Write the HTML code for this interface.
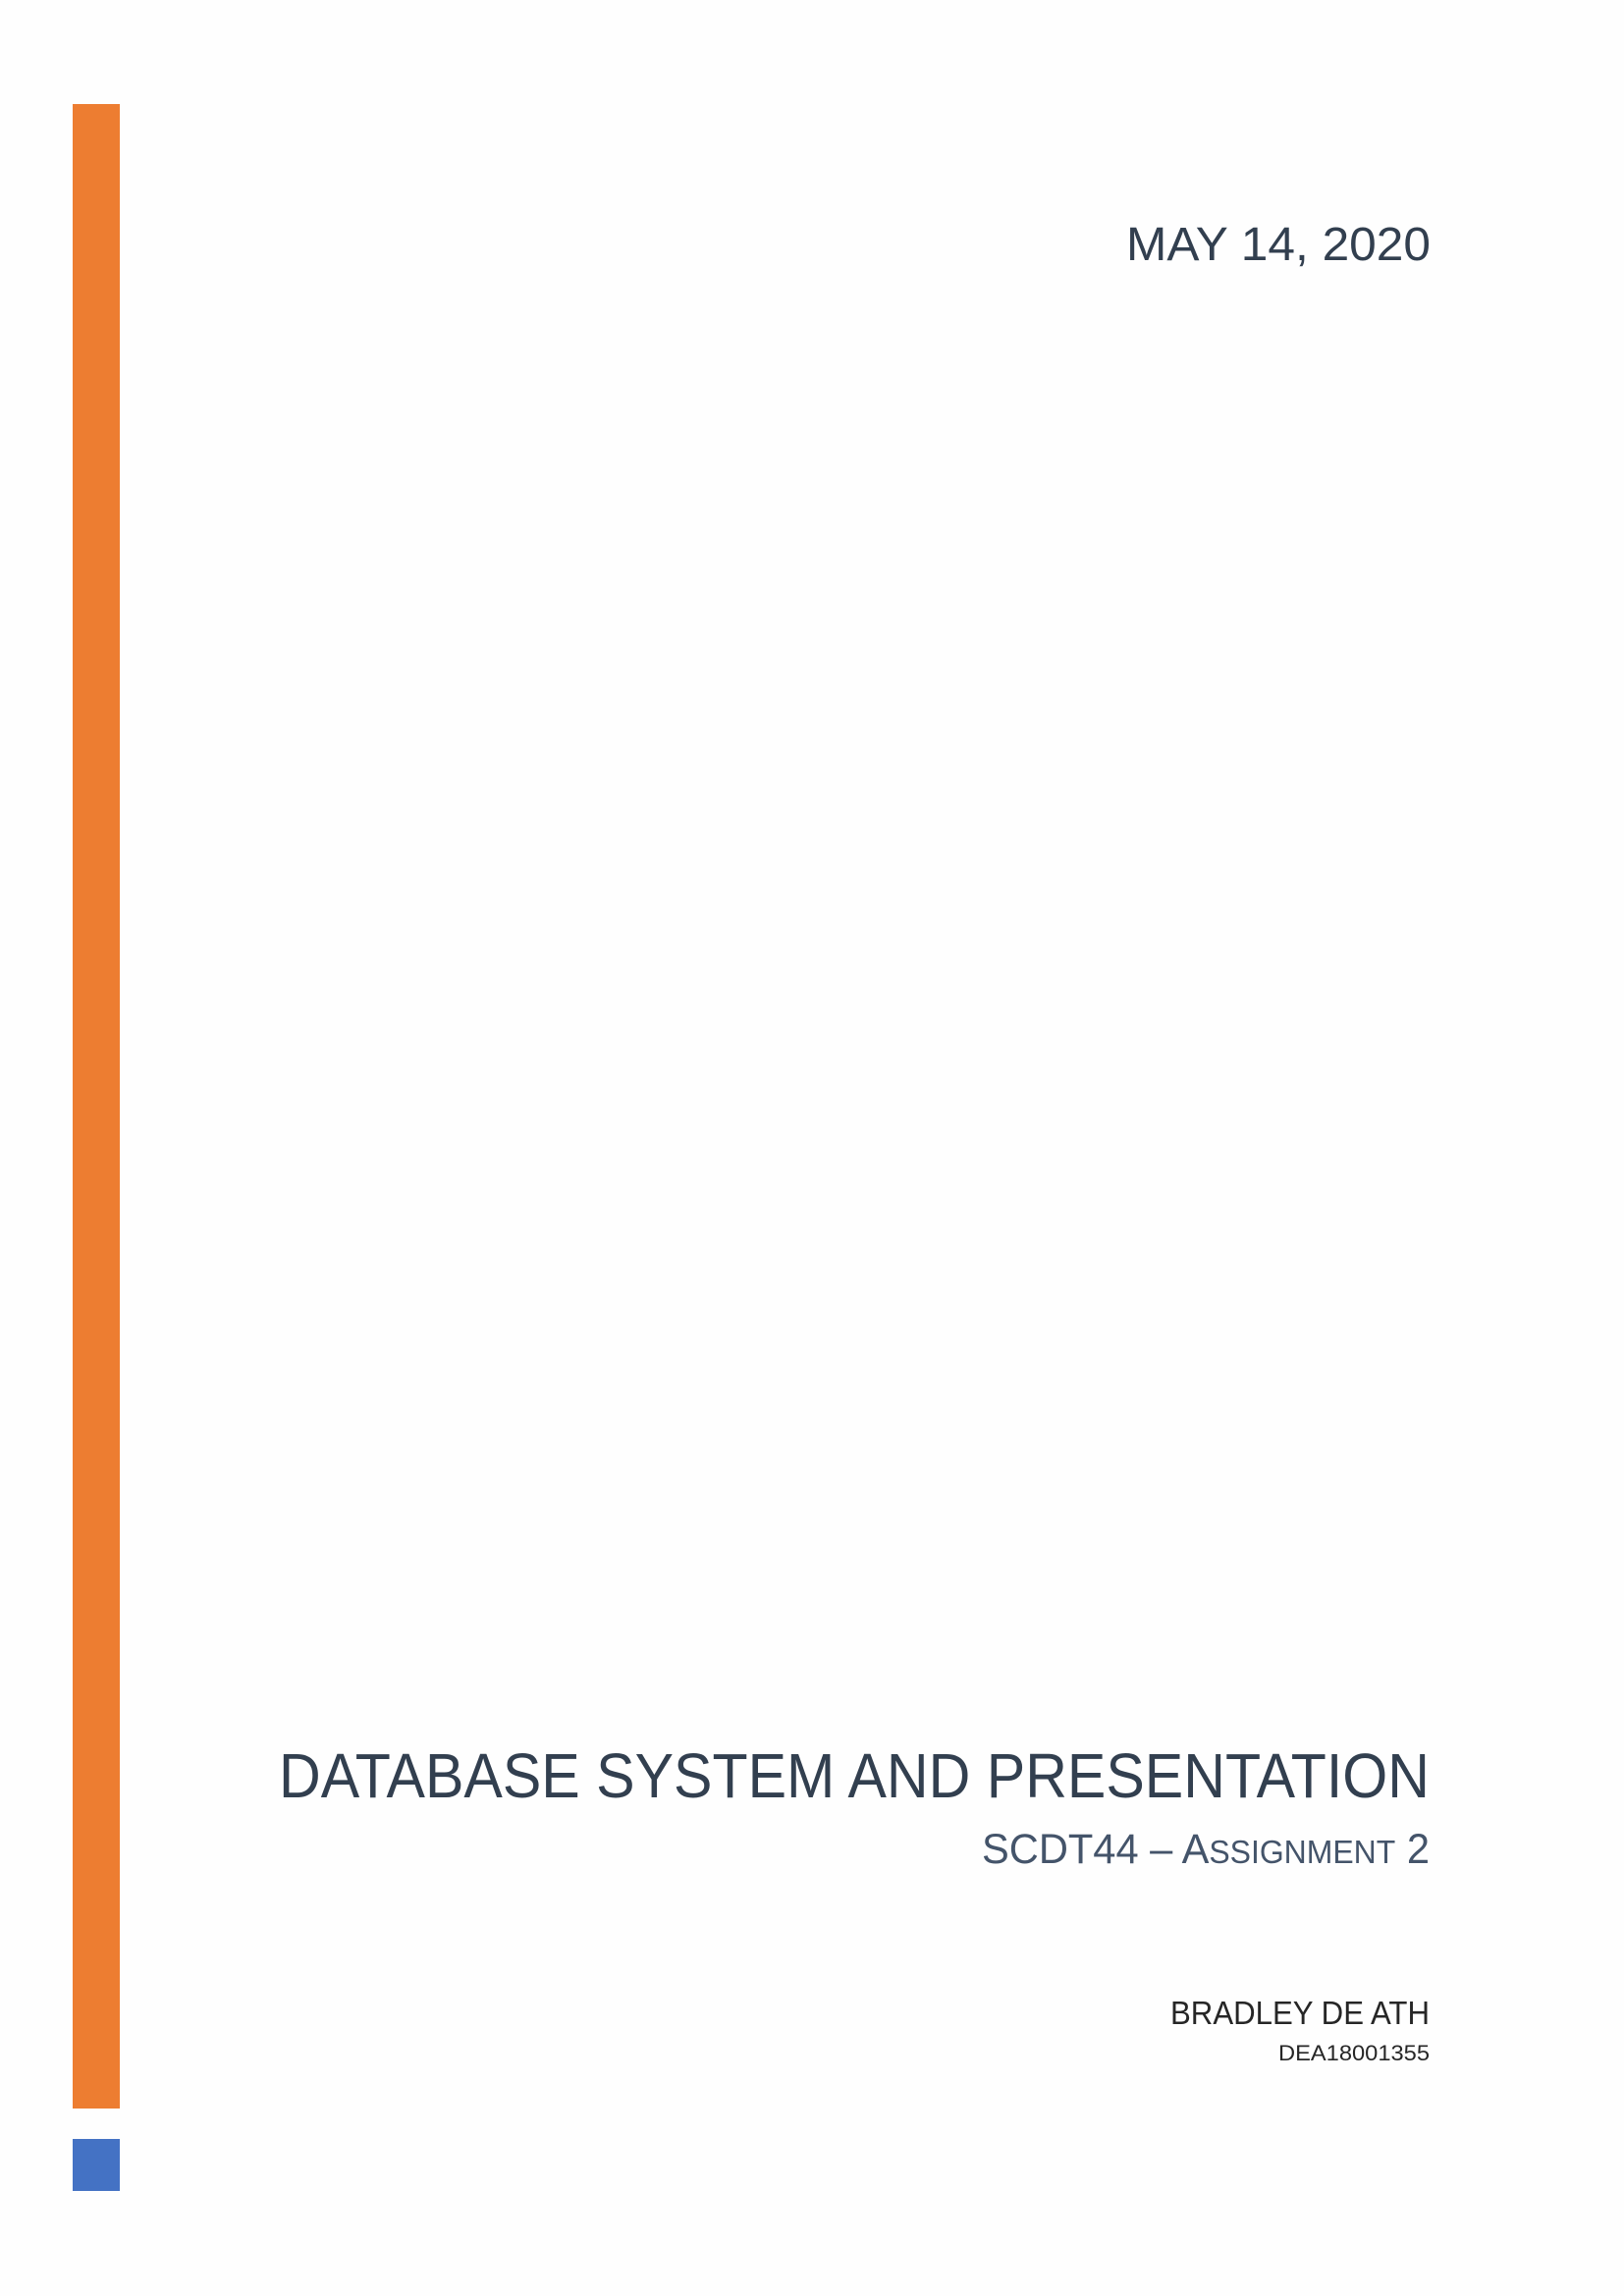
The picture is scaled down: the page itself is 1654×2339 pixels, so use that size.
<!DOCTYPE html>
<html><head><meta charset="utf-8"><style>
html,body{margin:0;padding:0;background:#fff;}
svg{display:block;}
</style></head><body>
<svg width="1654" height="2339" viewBox="0 0 1654 2339" xmlns="http://www.w3.org/2000/svg" font-family="Liberation Sans, sans-serif">
<rect x="0" y="0" width="1654" height="2339" fill="#fefefe"/>
<rect x="74" y="106" width="48" height="2042" fill="#ed7d31"/>
<rect x="74" y="2179" width="48" height="53" fill="#4472c4"/>
<text x="1147" y="265" font-size="48" fill="#323f4f" textLength="310" lengthAdjust="spacingAndGlyphs">MAY 14, 2020</text>
<text x="284" y="1831" font-size="64" fill="#323f4f" textLength="1172" lengthAdjust="spacingAndGlyphs">DATABASE SYSTEM AND PRESENTATION</text>
<text x="1000" y="1898" font-size="43" fill="#44546a" textLength="456" lengthAdjust="spacingAndGlyphs">SCDT44 – A<tspan font-size="33">SSIGNMENT</tspan> 2</text>
<text x="1192" y="2062" font-size="33" fill="#262626" textLength="264" lengthAdjust="spacingAndGlyphs">BRADLEY DE ATH</text>
<text x="1302" y="2099" font-size="22" fill="#262626" textLength="154" lengthAdjust="spacingAndGlyphs">DEA18001355</text>
</svg>
</body></html>
